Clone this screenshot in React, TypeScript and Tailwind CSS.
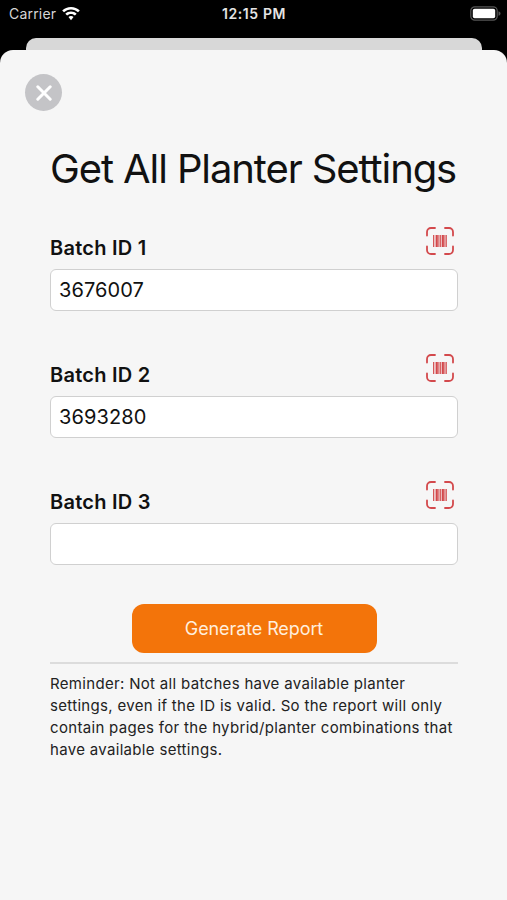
const batches = [
  { id: 1, value: '3676007' },
  { id: 2, value: '3693280' },
  { id: 3, value: '' },
]

function WifiIcon() {
  return (
    <svg viewBox="0 0 18 14" className="w-[18px] h-[14px]" fill="#fff">
      <path d="M9 0C5.6 0 2.500 1.300 0.200 3.500L2 5.300C3.800 3.600 6.300 2.500 9 2.500s5.200 1.100 7 2.800l1.800-1.800C15.500 1.300 12.400 0 9 0z" />
      <path d="M9 4.500c-2.200 0-4.200.9-5.700 2.200l1.800 1.800C6.100 7.500 7.500 6.900 9 6.900s2.900.6 3.900 1.600l1.800-1.800C13.200 5.400 11.200 4.500 9 4.500z" />
      <path d="M9 9c-1 0-1.900.4-2.500 1L9 13.300l2.500-3.300C10.900 9.400 10 9 9 9z" />
    </svg>
  )
}

function BatteryIcon() {
  return (
    <svg viewBox="0 0 31 15" className="w-[31px] h-[15px]">
      <rect x="0.800" y="0.800" width="26.400" height="13.400" rx="4" fill="none" stroke="#565656" strokeWidth="1.200" />
      <rect x="2.800" y="2.700" width="22.400" height="9.600" rx="1.800" fill="#fff" />
      <path d="M28.500 5.200c1.300.4 2 1.300 2 2.300s-.7 1.900-2 2.300z" fill="#565656" />
    </svg>
  )
}

function BarcodeIcon() {
  return (
    <svg viewBox="0 0 28 28" className="w-7 h-7" fill="none">
      <path
        d="M1 8.500V5a4 4 0 0 1 4-4h4M19 1h4a4 4 0 0 1 4 4v3.500M27 19.500v3.500a4 4 0 0 1-4 4h-4M9 27H5a4 4 0 0 1-4-4v-3.500"
        stroke="#d3494c"
        strokeWidth="1.800"
        strokeLinecap="round"
      />
      <rect x="7" y="8" width="14" height="12" fill="#d3494c" opacity="0.300" />
      <path d="M7.500 8v12M14.400 8v12M20.300 8v12" stroke="#d3494c" strokeWidth="0.900" />
      <path d="M10.800 8v12M16.900 8v12" stroke="#d3494c" strokeWidth="1.900" />
      <path d="M12.700 8v12M18.800 8v12" stroke="#d3494c" strokeWidth="0.600" />
    </svg>
  )
}

export default function App() {
  return (
    <div className="w-full h-[900px] flex flex-col overflow-hidden bg-black text-[#111] font-['Inter','Liberation_Sans',sans-serif]">

      <div className="h-[38px] shrink-0 grid grid-cols-3 items-start pl-[9px] pr-[6px] pt-[6px]">
        <div className="flex items-center gap-[6px] text-[#d6d6d6]">
          <span className="text-[14px] leading-4 tracking-[0.2px]">Carrier</span>
          <WifiIcon />
        </div>
        <span className="text-center text-[14px] leading-4 tracking-[0.6px] -ml-[2px] font-semibold text-[#e4e4e4]">12:15 PM</span>
        <div className="flex justify-end">
          <BatteryIcon />
        </div>
      </div>

      <div className="h-3 shrink-0 ml-[26px] mr-[25px] rounded-t-[10px] bg-[#d8d8d8]" />

      <div className="flex-1 rounded-t-[13px] bg-[#f6f6f6] pt-6">
        <button aria-label="Close" className="ml-[25px] w-[37px] h-[37px] rounded-full bg-[#c4c4c7] flex items-center justify-center">
          <svg viewBox="0 0 16 16" className="w-4 h-4" stroke="#fff" strokeWidth="3" strokeLinecap="round">
            <path d="M1.800 1.800l12.400 12.400M14.200 1.800L1.800 14.200" />
          </svg>
        </button>

        <div className="pl-[50px] pr-[49px]">
          <h1 className="mt-[34px] h-12 text-[40px] leading-[48px] whitespace-nowrap tracking-[-1.1px]">
            Get All Planter Settings
          </h1>

          <div className="mt-[34px] flex flex-col gap-[43px]">
            {batches.map((batch) => (
              <div key={batch.id}>
                <div className="h-[42px] flex justify-between pr-1">
                  <label htmlFor={`batch-${batch.id}`} className="pt-[9px] text-[20px] leading-6 tracking-[0.25px] font-semibold">
                    Batch ID {batch.id}
                  </label>
                  <BarcodeIcon />
                </div>
                <input
                  id={`batch-${batch.id}`}
                  defaultValue={batch.value}
                  className="block w-full h-[42px] px-2 rounded-md border border-[#d0d0d0] bg-white text-[20px] tracking-[0.1px]"
                />
              </div>
            ))}
          </div>

          <button className="block mx-auto mt-[39px] w-[245px] h-[49px] rounded-xl bg-[#f3740a] text-[#ffeedd] text-[18px] tracking-[-0.1px]">
            Generate Report
          </button>

          <div className="mt-[9px] h-[2px] bg-[#dcdcdc]" />

          <p className="mt-[9px] text-[15px] leading-[22px] whitespace-nowrap tracking-[0.32px] text-[#222]">
            Reminder: Not all batches have available planter<br />
            settings, even if the ID is valid. So the report will only<br />
            contain pages for the hybrid/planter combinations that<br />
            have available settings.
          </p>
        </div>
      </div>

    </div>
  )
}
